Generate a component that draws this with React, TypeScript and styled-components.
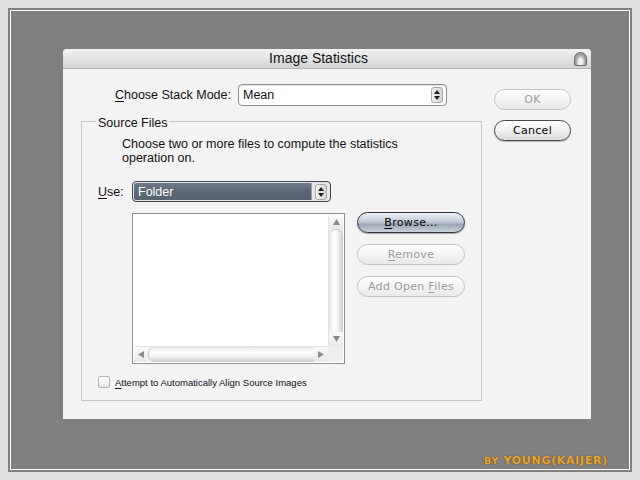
import React from "react";
import styled, { createGlobalStyle, css } from "styled-components";

const Global = createGlobalStyle`
  html, body { margin: 0; padding: 0; background: #dfdfdf; }
  body { font-family: "Liberation Sans", Arial, sans-serif; }
`;

const Page = styled.div`
  width: 640px;
  height: 480px;
  padding: 8px;
  box-sizing: border-box;
  background: #dfdfdf;
`;

const Frame = styled.div`
  width: 624px;
  height: 464px;
  box-sizing: border-box;
  background: #808080;
  box-shadow: inset 0 0 0 2px #808080, inset 0 0 0 3px #ffffff;
  padding: 41px 0 0 55px;
  display: flex;
  flex-direction: column;
`;

const Signature = styled.div`
  margin-top: auto;
  margin-bottom: 4px;
  align-self: flex-end;
  margin-right: 24px;
  font-family: "DejaVu Sans", Verdana, sans-serif;
  font-weight: bold;
  font-size: 11px;
  line-height: 14px;
  letter-spacing: 0.7px;
  color: #e2a63a;
  text-shadow: 0 0 1px #7a4e10, 0 0 1px #7a4e10;
`;

const Small = styled.span`
  font-size: 9.5px;
`;

const Dialog = styled.div`
  width: 528px;
  height: 370px;
  background: #f3f3f3;
  border-radius: 4px 4px 0 0;
  display: flex;
  flex-direction: column;
  overflow: hidden;
`;

const TitleBar = styled.div`
  height: 20px;
  box-sizing: border-box;
  border-bottom: 1px solid #b5b5b5;
  background: linear-gradient(#f2f2f2, #e0e0e0 60%, #d3d3d3);
  display: flex;
  align-items: center;
  padding-right: 4px;
`;

const Title = styled.div`
  flex: 1;
  text-align: center;
  font-size: 14px;
  color: #111;
  line-height: 19px;
`;

const CloseBtn = styled.div`
  width: 13px;
  height: 14px;
  box-sizing: border-box;
  border: 1px solid #6a6a6a;
  border-radius: 6.5px 6.5px 2px 2px;
  background: radial-gradient(ellipse at 50% 75%, #f0f0f0 0 2px, #b0b0b0 4px, #7a7a7a 8px);
`;

const Body = styled.div`
  display: flex;
  padding: 15px 0 0 18px;
`;

const LeftCol = styled.div`
  width: 401px;
  display: flex;
  flex-direction: column;
`;

const RightCol = styled.div`
  margin-left: 12px;
  margin-top: 5px;
  display: flex;
  flex-direction: column;
  gap: 10px;
`;

const Row = styled.div`
  display: flex;
  align-items: center;
`;

const Label = styled.label<{ $w: number; $align?: string }>`
  width: ${(p) => p.$w}px;
  text-align: ${(p) => p.$align || "left"};
  font-size: 12.5px;
  color: #111;
  flex: none;
`;

const U = styled.span`
  text-decoration: underline;
  text-underline-offset: 2px;
`;

const SelectBox = styled.div<{ $w: number; $h: number; $dark?: boolean }>`
  width: ${(p) => p.$w}px;
  height: ${(p) => p.$h}px;
  box-sizing: border-box;
  border-radius: 4px;
  display: flex;
  align-items: center;
  font-size: 12.5px;
  overflow: hidden;
  ${(p) =>
    p.$dark
      ? css`
          border: 1px solid #3f4650;
          background: #e6e6e6;
          color: #fff;
        `
      : css`
          border: 1px solid #8d8d8d;
          background: #fff;
          color: #111;
          box-shadow: inset 0 1px 1px rgba(0, 0, 0, 0.12);
        `}
`;

const SelectText = styled.div<{ $dark?: boolean }>`
  flex: 1;
  align-self: stretch;
  display: flex;
  align-items: center;
  padding-left: 4px;
  ${(p) =>
    p.$dark &&
    css`
      background: linear-gradient(#6f7b8b, #5b6777 50%, #56626f);
      border-right: 1px solid #9aa2ad;
      margin: 1px 0 1px 1px;
      border-radius: 2px 0 0 2px;
    `}
`;

const Spinner = styled.div`
  width: 12px;
  height: 16px;
  margin: 0 3px;
  box-sizing: border-box;
  border: 1px solid #a8a8a8;
  border-radius: 3px;
  background: linear-gradient(90deg, #f4f4f4, #d4d4d4);
  display: flex;
  align-items: center;
  justify-content: center;
`;

const SpinArrows = () => (
  <svg width="6" height="10" viewBox="0 0 6 10">
    <polygon points="3,0 6,4 0,4" fill="#222" />
    <polygon points="0,6 6,6 3,10" fill="#222" />
  </svg>
);

const Group = styled.div`
  margin-top: 15px;
  width: 401px;
  height: 280px;
  box-sizing: border-box;
  border: 1px solid #c6c6c6;
  padding-left: 16px;
  display: flex;
  flex-direction: column;
`;

const Legend = styled.div`
  align-self: flex-start;
  margin: -6px 0 0 -2px;
  padding: 0 2px;
  background: #f3f3f3;
  font-size: 12.5px;
  line-height: 14px;
  color: #111;
`;

const Desc = styled.div`
  margin: 7px 0 0 24px;
  font-size: 12.5px;
  line-height: 14px;
  color: #111;
`;

const UseRow = styled(Row)`
  margin-top: 16px;
`;

const ListRow = styled.div`
  display: flex;
  margin-top: 10px;
  margin-left: 34px;
`;

const ListBox = styled.div`
  margin-top: 1px;
  width: 213px;
  height: 151px;
  box-sizing: border-box;
  border: 1px solid #8f8f8f;
  padding: 1px;
  background: #fff;
  display: grid;
  grid-template-columns: 1fr 15px;
  grid-template-rows: 1fr 16px;
`;

const ListArea = styled.div`
  background: #fff;
`;

const VBar = styled.div`
  display: flex;
  flex-direction: column;
  background: #f0f0f0;
  border-left: 1px solid #e2e2e2;
`;

const HBar = styled.div`
  display: flex;
  background: #f0f0f0;
  border-top: 1px solid #e2e2e2;
`;

const Corner = styled.div`
  background: #eeeeee;
`;

const ArrowBtn = styled.div`
  flex: none;
  width: 14px;
  height: 14px;
  display: flex;
  align-items: center;
  justify-content: center;
  background: linear-gradient(#fafafa, #e8e8e8);
`;

const Track = styled.div<{ $vertical?: boolean }>`
  flex: 1;
  ${(p) =>
    p.$vertical
      ? css`
          border-radius: 7px 7px 0 0;
          background: linear-gradient(90deg, #e6e6e6, #ffffff 35%, #f2f2f2 65%, #c9c9c9);
          border-top: 1px solid #c4c4c4;
        `
      : css`
          border-radius: 7px 0 0 7px;
          background: linear-gradient(#e6e6e6, #ffffff 35%, #f2f2f2 65%, #c9c9c9);
          border-left: 1px solid #c4c4c4;
        `}
`;

const Tri = ({ dir }: { dir: "up" | "down" | "left" | "right" }) => {
  const pts = {
    up: "3.5,0 7,6 0,6",
    down: "0,0 7,0 3.5,6",
    left: "0,3.5 6,0 6,7",
    right: "0,0 6,3.5 0,7",
  }[dir];
  const vertical = dir === "up" || dir === "down";
  return (
    <svg width={vertical ? 7 : 6} height={vertical ? 6 : 7} viewBox={vertical ? "0 0 7 6" : "0 0 6 7"}>
      <polygon points={pts} fill="#8a8a8a" />
    </svg>
  );
};

const BtnCol = styled.div`
  margin-left: 12px;
  display: flex;
  flex-direction: column;
  gap: 11px;
`;

type Variant = "default" | "normal" | "disabled";

const Pill = styled.div<{ $variant: Variant; $w: number }>`
  box-sizing: border-box;
  width: ${(p) => p.$w}px;
  height: 21px;
  border-radius: 11px;
  display: flex;
  align-items: center;
  justify-content: center;
  font-family: "DejaVu Sans", Verdana, sans-serif;
  font-size: 11px;
  letter-spacing: 0.3px;
  ${(p) =>
    p.$variant === "disabled"
      ? css`
          border: 1px solid #c2c2c2;
          background: linear-gradient(#ffffff, #f4f4f4 50%, #e8e8e8);
          color: #9c9c9c;
        `
      : p.$variant === "normal"
      ? css`
          border: 1px solid #4a4a4a;
          background: linear-gradient(#ffffff, #f3f3f3 45%, #d9d9d9);
          color: #000;
          box-shadow: 0 1px 1px rgba(0, 0, 0, 0.25);
        `
      : css`
          border: 1px solid #2e3540;
          background: linear-gradient(#eef2f6, #c4ccd7 45%, #9ca7b6 60%, #c9d1db);
          color: #000;
          box-shadow: 0 1px 1px rgba(0, 0, 0, 0.3);
        `}
`;

const CheckRow = styled(Row)`
  margin-top: 12px;
  gap: 5px;
`;

const Check = styled.div`
  width: 12px;
  height: 12px;
  box-sizing: border-box;
  border: 1px solid #b3b3b3;
  border-radius: 2px;
  background: linear-gradient(#ffffff, #e6e6e6);
`;

const CheckLabel = styled.span`
  font-size: 9.5px;
  color: #111;
`;

export default function App() {
  return (
    <Page>
      <Global />
      <Frame>
        <Dialog>
          <TitleBar>
            <Title>Image Statistics</Title>
            <CloseBtn />
          </TitleBar>
          <Body>
            <LeftCol>
              <Row>
                <Label $w={150} $align="right">
                  <U>C</U>hoose Stack Mode:
                </Label>
                <SelectBox $w={209} $h={22} style={{ marginLeft: 7 }}>
                  <SelectText>Mean</SelectText>
                  <Spinner>
                    <SpinArrows />
                  </Spinner>
                </SelectBox>
              </Row>
              <Group>
                <Legend>Source Files</Legend>
                <Desc>
                  Choose two or more files to compute the statistics
                  <br />
                  operation on.
                </Desc>
                <UseRow>
                  <Label $w={34}>
                    <U>U</U>se:
                  </Label>
                  <SelectBox $w={199} $h={21} $dark>
                    <SelectText $dark>Folder</SelectText>
                    <Spinner>
                      <SpinArrows />
                    </Spinner>
                  </SelectBox>
                </UseRow>
                <ListRow>
                  <ListBox>
                    <ListArea />
                    <VBar>
                      <ArrowBtn>
                        <Tri dir="up" />
                      </ArrowBtn>
                      <Track $vertical />
                      <ArrowBtn>
                        <Tri dir="down" />
                      </ArrowBtn>
                    </VBar>
                    <HBar>
                      <ArrowBtn>
                        <Tri dir="left" />
                      </ArrowBtn>
                      <Track />
                      <ArrowBtn>
                        <Tri dir="right" />
                      </ArrowBtn>
                    </HBar>
                    <Corner />
                  </ListBox>
                  <BtnCol>
                    <Pill $variant="default" $w={108}>
                      <span>
                        <U>B</U>rowse...
                      </span>
                    </Pill>
                    <Pill $variant="disabled" $w={108}>
                      <span>
                        <U>R</U>emove
                      </span>
                    </Pill>
                    <Pill $variant="disabled" $w={108}>
                      <span>
                        Add Open <U>F</U>iles
                      </span>
                    </Pill>
                  </BtnCol>
                </ListRow>
                <CheckRow>
                  <Check />
                  <CheckLabel>
                    <U>A</U>ttempt to Automatically Align Source Images
                  </CheckLabel>
                </CheckRow>
              </Group>
            </LeftCol>
            <RightCol>
              <Pill $variant="disabled" $w={77}>
                OK
              </Pill>
              <Pill $variant="normal" $w={77}>
                Cancel
              </Pill>
            </RightCol>
          </Body>
        </Dialog>
        <Signature>
          <Small>BY</Small> YOUNG(KAIJER)
        </Signature>
      </Frame>
    </Page>
  );
}
